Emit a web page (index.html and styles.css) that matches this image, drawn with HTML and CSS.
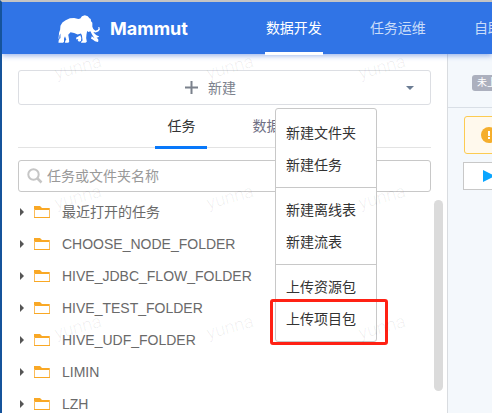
FILE: index.html
```html
<!DOCTYPE html>
<html lang="zh-CN">
<head>
<meta charset="utf-8">
<meta name="viewport" content="width=device-width, initial-scale=1">
<title>Mammut</title>
<link rel="stylesheet" href="styles.css">
</head>
<body>
<svg class="defs" aria-hidden="true">
  <symbol id="folder" viewBox="0 0 16 14">
    <path fill="#f9a825" d="M0 1h6l2 2h7v2H0z"/>
    <path fill="none" stroke="#fbbd5c" d="M.5 4v8.500M15.500 3v9.500"/>
    <path fill="none" stroke="#f9a825" d="M0 12.500h16"/>
  </symbol>
</svg>
<div class="app">
  <header class="header">
    <a class="brand" href="#">
      <svg class="logo" viewBox="24 15 128 86" aria-hidden="true">
        <path fill="#fff" d="M25 98L26 91L31 86L31 72L28 78L27 89L25 87L27 69L30 60L31 48L37 38L47 31L60 25L73 24L86 27L92 26L97 19L106 16L115 19L120 25L124 27L125 34L129 39L129 51L132 58L138 63L145 61L148 57L147 52L151 53L152 60L147 66L139 69L132 67L137 73L143 78L150 80L146 84L142 83L148 92L144 93L135 86L128 75L123 65L117 67L113 64L111 75L110 86L112 97L108 100L94 100L96 96L99 93L97 78L94 72L84 75L73 70L62 68L55 76L57 87L58 97L55 100L45 100L46 94L49 91L45 80L42 87L42 97L39 100L25 100Z"/>
        <path fill="#fff" d="M79 85L87 80L92 77L95 86L94 95L88 97L84 93L86 89L80 90Z"/>
        <path fill="#fff" d="M127 80L135 86L144 89L148 94L146 98L137 96L130 90L125 88Z"/>
      </svg>
      <span>Mammut</span>
    </a>
    <nav class="nav">
      <a class="nav-link active" href="#">数据开发</a>
      <a class="nav-link" href="#">任务运维</a>
      <a class="nav-link" href="#">自助分析</a>
    </nav>
  </header>
  <div class="columns">
    <aside class="sidebar">
      <div class="create">
        <button class="create-button" type="button">
          <svg class="plus" viewBox="0 0 13 13" aria-hidden="true"><path d="M0 6.500h13M6.500 0v13" stroke="#7b818c" stroke-width="2"/></svg>
          <span>新建</span>
          <svg class="arrow" viewBox="0 0 8 4" aria-hidden="true"><path fill="#6b7c93" d="M0 0h8L4 4z"/></svg>
        </button>
        <div class="menu">
          <div class="menu-group">
            <button type="button">新建文件夹</button>
            <button type="button">新建任务</button>
          </div>
          <div class="menu-group">
            <button type="button">新建离线表</button>
            <button type="button">新建流表</button>
          </div>
          <div class="menu-group">
            <button type="button">上传资源包</button>
            <button class="marked" type="button">上传项目包</button>
          </div>
        </div>
      </div>
      <div class="tabs">
        <button class="tab active" type="button">任务</button>
        <button class="tab" type="button">数据表</button>
      </div>
      <label class="search">
        <svg viewBox="0 0 16 16" aria-hidden="true"><circle cx="6.500" cy="6.500" r="5.200" fill="none" stroke="#c6c6c6" stroke-width="2"/><path d="M10.500 10.500L14.500 14.500" stroke="#c6c6c6" stroke-width="2.500"/></svg>
        <input type="text" placeholder="任务或文件夹名称" aria-label="任务或文件夹名称">
      </label>
      <ul class="tree">
        <li><i class="caret"></i><svg class="folder"><use href="#folder"/></svg>最近打开的任务</li>
        <li><i class="caret"></i><svg class="folder"><use href="#folder"/></svg>CHOOSE_NODE_FOLDER</li>
        <li><i class="caret"></i><svg class="folder"><use href="#folder"/></svg>HIVE_JDBC_FLOW_FOLDER</li>
        <li><i class="caret"></i><svg class="folder"><use href="#folder"/></svg>HIVE_TEST_FOLDER</li>
        <li><i class="caret"></i><svg class="folder"><use href="#folder"/></svg>HIVE_UDF_FOLDER</li>
        <li><i class="caret"></i><svg class="folder"><use href="#folder"/></svg>LIMIN</li>
        <li><i class="caret"></i><svg class="folder"><use href="#folder"/></svg>LZH</li>
      </ul>
      <div class="scrollbar"></div>
    </aside>
    <main class="main">
      <div class="status"><span class="tag">未上线</span></div>
      <div class="alert">
        <svg viewBox="0 0 16 16" aria-hidden="true"><circle cx="8" cy="8" r="8" fill="#f5ae2c"/><path d="M7 4h2v5H7zM7 10h2v2H7z" fill="#fff"/></svg>
      </div>
      <div class="toolbar">
        <button type="button" aria-label="运行"><svg viewBox="0 0 12 12" aria-hidden="true"><path fill="#0aa5ff" d="M0 0L12 6L0 12z"/></svg></button>
      </div>
    </main>
  </div>
  <div class="watermarks" aria-hidden="true">
    <span>yunna</span><span>yunna</span><span>yunna</span>
    <span>yunna</span><span>yunna</span><span>yunna</span>
    <span>yunna</span><span>yunna</span><span>yunna</span>
  </div>
</div>
</body>
</html>
```
FILE: styles.css
```css
* {
  box-sizing: border-box;
}

body {
  margin: 0;
  overflow: hidden;
  font: 14px/20px "Liberation Sans", "Noto Sans CJK SC", sans-serif;
  color: #6a6a6a;
  background: #fff;
}

button,
input {
  margin: 0;
  padding: 0;
  border: 0;
  background: none;
  font: inherit;
  color: inherit;
}

a {
  color: inherit;
  text-decoration: none;
}

svg {
  flex: none;
}

.defs {
  display: none;
}

.app {
  position: relative;
  display: flex;
  flex-direction: column;
  height: 100vh;
  overflow: hidden;
  border-top: 2px solid #c4c4c4;
  border-left: 2px solid #15539b;
}

.header {
  position: relative;
  z-index: 1;
  display: flex;
  flex: none;
  height: 52px;
  padding-left: 56px;
  gap: 77px;
  background: #3074e6;
  box-shadow: 0 2px 5px rgba(48, 100, 210, 0.45);
}

.brand {
  display: flex;
  flex: none;
  align-items: center;
  gap: 10px;
  padding-top: 2px;
  color: #fff;
  font: bold 18px/20px Inter, sans-serif;
}

.logo {
  width: 42px;
  height: 28px;
}

.nav {
  display: flex;
  gap: 46px;
}

.nav-link {
  flex: none;
  height: 53px;
  padding: 0 1px;
  line-height: 52px;
  color: #c9dcf9;
}

.nav-link.active {
  color: #fff;
  border-bottom: 3px solid #fff;
}

.columns {
  display: flex;
  flex: 1;
  min-height: 0;
}

.sidebar {
  position: relative;
  flex: 0 0 91%;
  padding: 16px 16px 0;
  border-right: 1px solid #d9dce0;
}

.create {
  position: relative;
}

.create-button {
  display: flex;
  align-items: center;
  justify-content: center;
  gap: 10px;
  width: 100%;
  height: 35px;
  padding-left: 6px;
  border: 1px solid #dcdee3;
  border-radius: 3px;
  color: #7b818c;
}

.plus {
  width: 13px;
  height: 13px;
  margin-left: auto;
}

.arrow {
  width: 8px;
  height: 4px;
  margin: 0 16px 0 auto;
}

.menu {
  position: absolute;
  z-index: 2;
  top: 38px;
  left: 257px;
  width: 102px;
  padding-top: 2px;
  border: 1px solid #c8c8c8;
  border-radius: 3px;
  background: #fff;
  color: #333;
}

.menu-group {
  padding: 6px 0;
}

.menu-group + .menu-group {
  border-top: 1px solid #c8c8c8;
}

.menu button {
  display: block;
  width: 100%;
  height: 32px;
  padding-left: 10px;
  text-align: left;
}

.marked {
  position: relative;
}

.marked::after {
  content: "";
  position: absolute;
  inset: -4px -12px -10px -6px;
  border: 3px solid #ff2114;
  border-radius: 3px;
}

.tabs {
  display: flex;
  justify-content: center;
  gap: 33px;
  height: 43px;
  padding-left: 13px;
  border-bottom: 1px solid #e3e3e3;
}

.tab {
  height: 44px;
  padding: 0 12px;
  border-bottom: 3px solid transparent;
  color: #6f6f84;
}

.tab.active {
  color: #333;
  border-color: #0878fa;
}

.search {
  display: flex;
  align-items: center;
  gap: 4px;
  height: 32px;
  margin: 12px 0 4px;
  padding: 0 8px;
  border: 1px solid #c8c8c8;
  border-radius: 3px;
}

.search svg {
  width: 16px;
  height: 16px;
}

.search input {
  flex: 1;
  min-width: 0;
  outline: 0;
}

.search input::placeholder {
  color: #999;
}

.tree {
  margin: 0;
  padding: 0;
  list-style: none;
}

.tree li {
  display: flex;
  align-items: center;
  height: 32px;
  padding-left: 2px;
}

.caret {
  border: 4px solid transparent;
  border-right: 0;
  border-left-color: #555;
}

.folder {
  width: 16px;
  height: 14px;
  margin: 0 12px 0 10px;
}

.scrollbar {
  position: absolute;
  top: 146px;
  right: 4px;
  width: 9px;
  height: 191px;
  border-radius: 5px;
  background: #dbdbdb;
}

.main {
  flex: 1;
  min-width: 0;
  overflow: hidden;
  background: #f4f8fc;
}

.status {
  height: 54px;
  padding: 21px 0 0 24px;
  border-bottom: 1px solid #d9dfe6;
}

.tag {
  display: block;
  width: 48px;
  padding: 0 5px;
  border-radius: 3px;
  background: #acb0be;
  color: #fff;
  font-size: 10px;
  line-height: 16px;
}

.alert {
  display: flex;
  align-items: center;
  width: 100%;
  height: 38px;
  margin: 8px 0 8px 16px;
  padding-left: 16px;
  border: 1px solid #fccb52;
  border-radius: 3px;
  background: #fff9ed;
}

.alert svg {
  width: 16px;
  height: 16px;
}

.toolbar {
  display: flex;
  align-items: center;
  width: 100%;
  height: 28px;
  margin-left: 15px;
  padding-left: 19px;
  border: 1px solid #c8c8c8;
  background: #fff;
}

.toolbar svg {
  display: block;
  width: 12px;
  height: 12px;
}

.watermarks {
  position: absolute;
  z-index: 3;
  top: 0;
  left: 0;
  display: grid;
  grid-template-columns: repeat(3, 152px);
  grid-auto-rows: 130px;
  place-items: center;
  pointer-events: none;
  color: rgba(0, 0, 0, 0.07);
  font: 300 18px/16px Roboto, sans-serif;
}

.watermarks span {
  transform: rotate(-15deg);
}
```
